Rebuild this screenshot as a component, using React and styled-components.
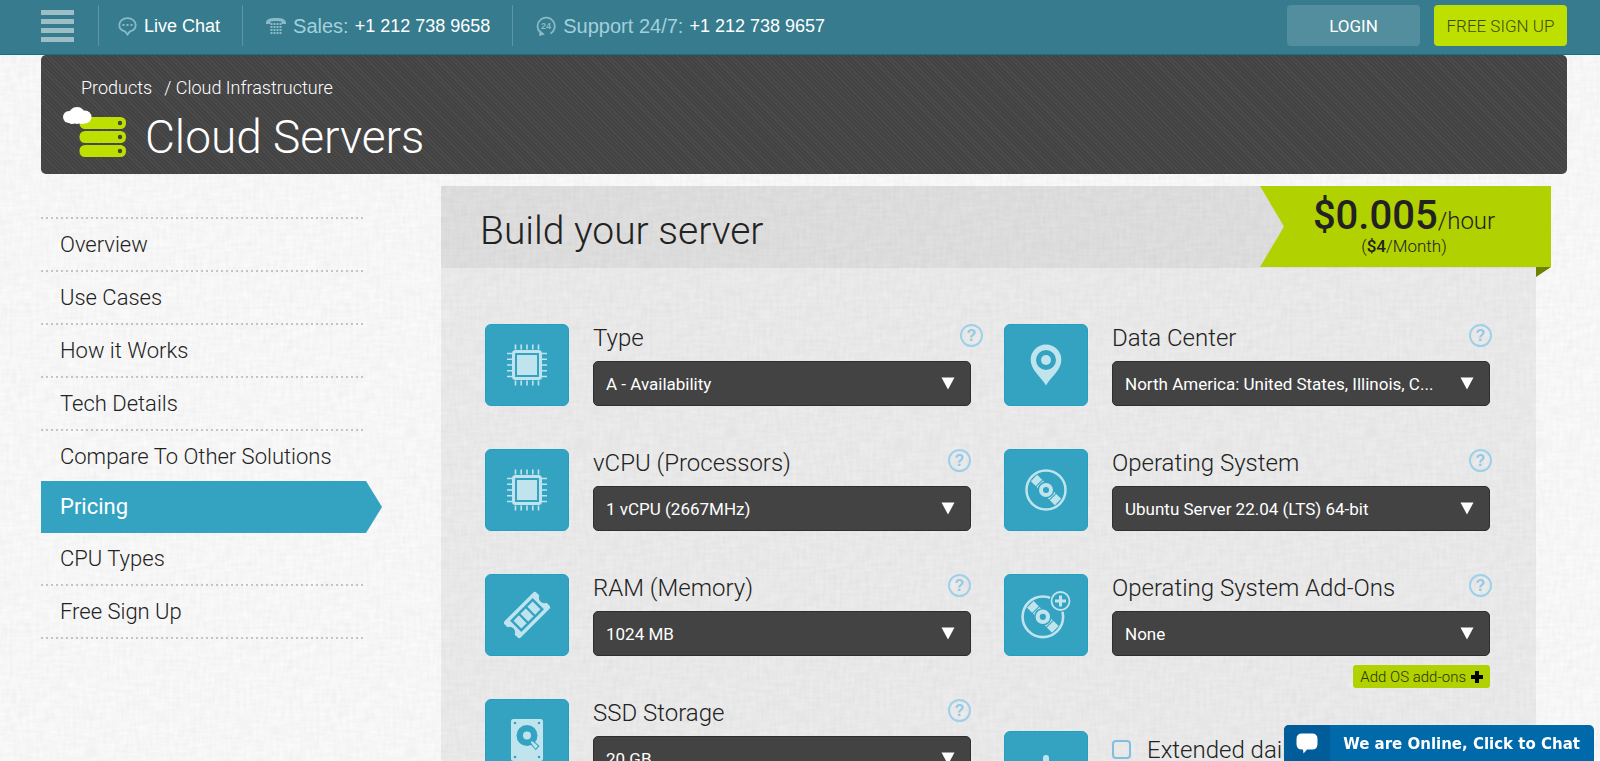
import React, { useState } from "react";
import styled, { createGlobalStyle, css } from "styled-components";

const LINEN = `url("data:image/svg+xml,%3Csvg xmlns='http://www.w3.org/2000/svg' width='320' height='320'%3E%3Cfilter id='a' x='0' y='0' width='100%25' height='100%25'%3E%3CfeTurbulence type='fractalNoise' baseFrequency='.06 .3' numOctaves='2' stitchTiles='stitch'/%3E%3CfeColorMatrix values='0 0 0 0 0 0 0 0 0 0 0 0 0 0 0 .04 0 0 0 -.01'/%3E%3C/filter%3E%3Cfilter id='b' x='0' y='0' width='100%25' height='100%25'%3E%3CfeTurbulence type='fractalNoise' baseFrequency='.3 .06' numOctaves='2' seed='4' stitchTiles='stitch'/%3E%3CfeColorMatrix values='0 0 0 0 0 0 0 0 0 0 0 0 0 0 0 .04 0 0 0 -.01'/%3E%3C/filter%3E%3Crect width='320' height='320' filter='url(%23a)'/%3E%3Crect width='320' height='320' filter='url(%23b)'/%3E%3C/svg%3E")`;

const ARROW = `url("data:image/svg+xml,%3Csvg xmlns='http://www.w3.org/2000/svg' width='14' height='13'%3E%3Cpath d='M.5.5h13L7 12.5z' fill='%23fff'/%3E%3C/svg%3E")`;

const GlobalStyle = createGlobalStyle`
  *, *::before, *::after {
    box-sizing: border-box;
  }
  body {
    margin: 0;
    background: #fbfbfb ${LINEN};
    color: #222;
    font-family: Roboto, "Open Sans", sans-serif;
    font-weight: 300;
  }
  h1, h2, p, ul {
    margin: 0;
    padding: 0;
    font-weight: 300;
  }
  a {
    color: inherit;
    text-decoration: none;
  }
  button, select, input {
    font: inherit;
    cursor: pointer;
  }
  svg {
    display: block;
    flex: none;
  }
`;

/* top bar */

const TopBar = styled.header`
  display: flex;
  align-items: center;
  height: 55px;
  padding: 0 33px 3px 41px;
  background: #367c8e;
  border-bottom: 1px solid #12708a;
`;

const MenuButton = styled.button`
  display: flex;
  flex-direction: column;
  gap: 4px;
  width: 33px;
  margin-right: 24px;
  padding: 0;
  border: 0;
  background: none;
`;

const MenuBar = styled.span`
  height: 5px;
  background: #9bbec7;
`;

const Contact = styled.a`
  display: flex;
  align-items: center;
  height: 41px;
  padding: 1px 22px 0 ${(p) => p.$indent || 23}px;
  border-left: 1px solid #5d95a4;
  font: 20px "Liberation Sans", Arial, sans-serif;
  color: #a3d0dc;
  white-space: nowrap;

  svg {
    margin-right: 7px;
  }
  strong {
    font-size: 18px;
    font-weight: 400;
    color: #fff;
  }
  span + strong {
    margin-left: 6px;
  }
`;

const Actions = styled.div`
  display: flex;
  gap: 14px;
  margin-left: auto;
`;

const ActionButton = styled.button`
  width: 133px;
  height: 41px;
  padding: 0;
  border: 0;
  border-radius: 4px;
  font-size: 17px;
  white-space: nowrap;
  background: ${(p) => (p.$primary ? "#bee000" : "#528e9d")};
  color: ${(p) => (p.$primary ? "#3f4a10" : "#fff")};
  font-weight: ${(p) => (p.$primary ? 300 : 400)};
`;

/* title banner */

const Banner = styled.section`
  margin: 0 33px 0 41px;
  padding: 20px 22px 11px;
  border-radius: 5px;
  background: repeating-linear-gradient(45deg, #434343 0 2px, #4c4c4c 2px 3px);
  color: #fff;
`;

const Breadcrumbs = styled.nav`
  display: flex;
  gap: 12px;
  padding-left: 18px;
  font-size: 18px;
  line-height: 26px;
`;

const Title = styled.h1`
  display: flex;
  align-items: center;
  gap: 19px;
  font-size: 46px;
  line-height: 52px;

  span {
    padding-top: 10px;
  }
`;

/* body */

const Body = styled.main`
  display: flex;
  align-items: flex-start;
  justify-content: space-between;
  gap: 59px;
  padding: 12px 64px 0 41px;
`;

const DOTS = "repeating-linear-gradient(90deg, #c4c4c4 0 2px, transparent 2px 5px)";

const SideMenu = styled.ul`
  flex: none;
  width: 341px;
  margin-top: 31px;
  list-style: none;

  &::before {
    content: "";
    display: block;
    width: 322px;
    height: 2px;
    background: ${DOTS};
  }
`;

const SideLink = styled.a`
  display: block;
  width: 322px;
  padding: 10px 19px 12px;
  background: ${DOTS} bottom / 100% 2px no-repeat;
  font-size: 22px;
  line-height: 31px;
  white-space: nowrap;

  ${(p) =>
    p.$active &&
    css`
      width: 341px;
      height: 52px;
      margin-top: -3px;
      background: #34a3c2;
      color: #fff;
      font-weight: 400;
      clip-path: polygon(0 0, 325px 0, 100% 50%, 325px 100%, 0 100%);
    `}
`;

const Panel = styled.section`
  flex: 1;
  min-width: 0;
  background: rgba(0, 0, 0, 0.055);
`;

const PanelHead = styled.div`
  display: flex;
  align-items: flex-start;
  justify-content: space-between;
  height: 82px;
  padding-left: 39px;
  background: rgba(0, 0, 0, 0.05);

  h2 {
    padding-top: 8px;
    font-size: 39px;
    line-height: 74px;
  }
`;

const Ribbon = styled.div`
  position: relative;
  width: 291px;
  height: 81px;
  margin-right: -15px;
  padding: 12px 3px 0 0;
  background: #b1d100;
  clip-path: polygon(0 0, 100% 0, 100% 81px, 276px 91px, 276px 81px, 0 81px, 24px 50%);
  text-align: center;

  &::after {
    content: "";
    position: absolute;
    top: 100%;
    right: 0;
    width: 15px;
    height: 10px;
    background: #6d8100;
  }
`;

const Price = styled.p`
  font-size: 24px;
  line-height: 40px;

  strong {
    font-size: 40px;
    line-height: 36px;
    font-weight: 500;
  }
`;

const Monthly = styled.p`
  font-size: 17px;
  line-height: 18px;
  margin-top: -4px;

  strong {
    font-weight: 500;
  }
`;

const Form = styled.form`
  display: grid;
  grid-template-columns: 1fr 1fr;
  column-gap: 33px;
  padding: 56px 46px 45px 44px;
`;

const Column = styled.div`
  display: flex;
  flex-direction: column;
  gap: 43px;
  min-width: 0;
`;

const FieldRow = styled.div`
  display: flex;
  align-items: flex-start;
  gap: 24px;
`;

const Tile = styled.div`
  display: flex;
  flex: none;
  align-items: center;
  justify-content: center;
  width: 84px;
  height: 82px;
  border: 1px solid #239fc1;
  border-radius: 6px;
  background: #34a3c2;
  color: #c0e4ed;
`;

const FieldBody = styled.div`
  display: flex;
  flex: 1;
  flex-direction: column;
  min-width: 0;
`;

const FieldHead = styled.div`
  display: flex;
  align-items: flex-start;
  justify-content: space-between;
  height: 37px;
  margin-right: -${(p) => p.$outset || 0}px;

  label {
    font-size: 24px;
    line-height: 28px;
    white-space: nowrap;
  }
`;

const HelpButton = styled.button`
  width: 23px;
  height: 23px;
  padding: 0;
  border: 2px solid #9fd0ea;
  border-radius: 50%;
  background: none;
  color: #94c9e6;
  font: bold 16px/18px "Liberation Sans", Arial, sans-serif;
`;

const Select = styled.select`
  width: 100%;
  height: 45px;
  padding: 0 40px 0 12px;
  appearance: none;
  border: 1px solid #2f2f2f;
  border-radius: 5px;
  background: #434343 ${ARROW} no-repeat right 15px top 15px;
  color: #fff;
  font-size: 17px;
  font-weight: 400;
`;

const AddButton = styled.button`
  display: flex;
  align-items: center;
  align-self: flex-end;
  gap: 5px;
  height: 23px;
  margin-top: 9px;
  padding: 0 7px;
  border: 0;
  border-radius: 3px;
  background: #b1d100;
  color: #2b3300;
  font-size: 15px;
  white-space: nowrap;
`;

const CheckLabel = styled.label`
  display: flex;
  align-items: center;
  gap: 16px;
  height: 37px;
  font-size: 24px;
  white-space: nowrap;
`;

const Checkbox = styled.input`
  width: 19px;
  height: 19px;
  margin: 0;
  appearance: none;
  border: 2px solid #7fc0e0;
  border-radius: 4px;

  &:checked {
    background: #34a3c2;
  }
`;

const ChatButton = styled.button`
  position: fixed;
  right: 6px;
  bottom: 0;
  display: flex;
  height: 36px;
  padding: 0;
  border: 0;
  border-radius: 5px 5px 0 0;
  overflow: hidden;
  background: #0069aa;
  color: #fff;
  font: bold 15px/36px "DejaVu Sans", Verdana, sans-serif;
  white-space: nowrap;
`;

const ChatIcon = styled.span`
  display: flex;
  align-items: center;
  justify-content: center;
  width: 46px;
  height: 36px;
  background: #005d99;
`;

const ChatText = styled.span`
  padding: 1px 14px 0 13px;
`;

/* icons */

const BubbleIcon = () => (
  <svg width="19" height="19" viewBox="0 0 19 19" fill="none" stroke="#8bb9c5">
    <path d="M9.5 1.2c4.6 0 8.2 3 8.2 6.8 0 3-2.3 5.5-5.7 6.4L9.5 17.5 7 14.4C3.6 13.5 1.3 11 1.3 8c0-3.8 3.6-6.8 8.2-6.8z" strokeWidth="1.8" />
    <path d="M4.5 8h10" strokeWidth="2" strokeDasharray="2 2" />
  </svg>
);

const PhoneIcon = () => (
  <svg width="20" height="17" viewBox="0 0 20 17" fill="#8bb9c5">
    <path d="M0 4.5C.4 1.3 3.5 0 10 0s9.6 1.3 10 4.5V6h-4.5V3.5c-3-.7-8-.7-11 0V6H0z" />
    {[5, 8, 11, 14].map((y) =>
      [4, 7, 10, 13].map((x) => <rect key={`${x}-${y}`} x={x + 0.5} y={y} width="2" height="2" />)
    )}
  </svg>
);

const SupportIcon = () => (
  <svg width="20" height="20" viewBox="0 0 20 20">
    <path d="M14.5 17.6A8.6 8.6 0 1 0 4 16.2" fill="none" stroke="#8bb9c5" strokeWidth="1.8" />
    <path d="M3 20l.8-6 5 4.5z" fill="#8bb9c5" />
    <text x="10" y="13" textAnchor="middle" fontFamily="Liberation Sans" fontWeight="700" fontSize="9" fill="#8bb9c5">
      24
    </text>
  </svg>
);

const ServersIcon = () => (
  <svg width="63" height="51" viewBox="0 0 63 51">
    {[10, 24, 38].map((y) => (
      <g key={y}>
        <rect x="16.5" y={y} width="46.5" height="12" rx="5.5" fill="#bee000" />
        <circle cx="57" cy={y + 6} r="2.2" fill="#444" />
      </g>
    ))}
    <g fill="#fff">
      <circle cx="6" cy="10" r="6" />
      <circle cx="14" cy="8.5" r="8.5" />
      <circle cx="22" cy="10" r="6.5" />
      <circle cx="9" cy="12.5" r="4.5" />
      <circle cx="19" cy="12.5" r="4.5" />
    </g>
  </svg>
);

const ChipIcon = () => (
  <svg width="40" height="42" viewBox="0 0 40 42" fill="none" stroke="currentColor">
    <rect x="6.5" y="7.5" width="27" height="27" rx="2" strokeWidth="3" />
    <rect x="10" y="11" width="20" height="20" fill="currentColor" stroke="none" />
    <path d="M8.5 .5v5M14.2 .5v5M20 .5v5M25.800 .5v5M31.500 .5v5M8.500 36.500v5M14.200 36.500v5M20 36.500v5M25.800 36.500v5M31.500 36.500v5" strokeWidth="1.6" />
    <path d="M0 9.500h5M0 15.200h5M0 21h5M0 26.800h5M0 32.500h5M35 9.500h5M35 15.200h5M35 21h5M35 26.800h5M35 32.500h5" strokeWidth="1.6" />
  </svg>
);

const RamIcon = () => (
  <svg width="48" height="48" viewBox="0 0 48 48">
    <g transform="rotate(-45 24 24)">
      <path d="M4 12.500h40q2.500 0 2.500 2.500v4q-3.500 1.500-3.500 5t3.500 5v4q0 2.500-2.500 2.500H4q-2.500 0-2.500-2.500v-4Q5 27.500 5 24t-3.500-5v-4q0-2.500 2.500-2.500z" fill="currentColor" />
      <rect x="8" y="16" width="32" height="16" fill="#34a3c2" />
      <path d="M10.500 18.500h7.500v11h-7.500zM20.250 18.500h7.500v11h-7.500zM30 18.500h7.500v11H30z" fill="currentColor" />
    </g>
  </svg>
);

const DriveIcon = () => (
  <svg width="32" height="42" viewBox="0 0 32 42">
    <rect width="32" height="42" rx="2.5" fill="currentColor" />
    <g fill="#34a3c2">
      <circle cx="4" cy="4" r="1.3" />
      <circle cx="28" cy="4" r="1.3" />
      <circle cx="4" cy="38" r="1.3" />
      <circle cx="28" cy="38" r="1.3" />
      <circle cx="16" cy="16.5" r="10.5" />
    </g>
    <circle cx="16" cy="16.5" r="4" fill="currentColor" />
    <path d="M20 19.500l8.500 7.500-3.800 4.200-7.200-8.700z" fill="#34a3c2" />
    <path d="M21 22l6 5-2.500 2.800-4.700-6.300z" fill="currentColor" />
  </svg>
);

const PinIcon = () => (
  <svg width="32" height="42" viewBox="0 0 32 42">
    <path fill="currentColor" fillRule="evenodd" d="M16 .5A15.300 15.300 0 0 1 31.300 16C31.300 26 21 33 16 41.500 11 33 .7 26 .7 16A15.300 15.300 0 0 1 16 .5zM16 6a10 10 0 1 0 0 20 10 10 0 0 0 0-20z" />
    <circle cx="16" cy="16" r="5" fill="currentColor" />
  </svg>
);

const discArt = (
  <>
    <circle cx="21" cy="21" r="19.5" fill="none" stroke="currentColor" strokeWidth="2.5" />
    <g transform="rotate(45 21 21)" fill="currentColor">
      <path d="M4 16.500h7v9H4zM12 16.500h3v9h-3zM27 16.500h3v9h-3zM31 16.500h7v9h-7z" />
    </g>
    <circle cx="21" cy="21" r="8.5" fill="#34a3c2" />
    <circle cx="21" cy="21" r="5" fill="none" stroke="currentColor" strokeWidth="4" />
  </>
);

const DiscIcon = () => (
  <svg width="42" height="42" viewBox="0 0 42 42">
    {discArt}
  </svg>
);

const DiscPlusIcon = () => (
  <svg width="50" height="48" viewBox="0 0 50 48">
    <g transform="translate(0 4) scale(1.04)">{discArt}</g>
    <circle cx="39.5" cy="10" r="11" fill="#34a3c2" />
    <circle cx="39.5" cy="10" r="9" fill="none" stroke="currentColor" strokeWidth="1.8" />
    <path d="M39.500 4.500v11M34 10h11" stroke="currentColor" strokeWidth="3" />
  </svg>
);

const BackupIcon = () => (
  <svg width="40" height="34" viewBox="0 0 40 34" fill="none" stroke="currentColor" strokeWidth="6" strokeLinecap="round" strokeLinejoin="round">
    <path d="M20 3v24M10 19l10 10 10-10" />
  </svg>
);

const PlusIcon = () => (
  <svg width="12" height="12" viewBox="0 0 12 12">
    <path d="M4 0h4v4h4v4H8v4H4V8H0V4h4z" fill="#000" />
  </svg>
);

const SpeechIcon = () => (
  <svg width="22" height="21" viewBox="0 0 22 21">
    <path d="M6 .5h10q5.500 0 5.500 5.500v5q0 5.500-5.500 5.500h-5L7.500 20.500 7 16.500H6Q.5 16.500.5 11V6Q.5.5 6 .5z" fill="#fff" />
  </svg>
);

const MENU = [
  "Overview",
  "Use Cases",
  "How it Works",
  "Tech Details",
  "Compare To Other Solutions",
  "Pricing",
  "CPU Types",
  "Free Sign Up",
];

const HARDWARE = [
  { id: "type", label: "Type", value: "A - Availability", icon: <ChipIcon />, outset: 12 },
  { id: "vcpu", label: "vCPU (Processors)", value: "1 vCPU (2667MHz)", icon: <ChipIcon /> },
  { id: "ram", label: "RAM (Memory)", value: "1024 MB", icon: <RamIcon /> },
  { id: "ssd", label: "SSD Storage", value: "20 GB", icon: <DriveIcon /> },
];

const SOFTWARE = [
  { id: "dc", label: "Data Center", value: "North America: United States, Illinois, C...", icon: <PinIcon />, outset: 2 },
  { id: "os", label: "Operating System", value: "Ubuntu Server 22.04 (LTS) 64-bit", icon: <DiscIcon />, outset: 2 },
  { id: "addons", label: "Operating System Add-Ons", value: "None", icon: <DiscPlusIcon />, outset: 2, action: "Add OS add-ons" },
];

const Field = ({ id, label, value, icon, outset, action }) => (
  <FieldRow>
    <Tile>{icon}</Tile>
    <FieldBody>
      <FieldHead $outset={outset}>
        <label htmlFor={id}>{label}</label>
        <HelpButton type="button">?</HelpButton>
      </FieldHead>
      <Select id={id}>
        <option>{value}</option>
      </Select>
      {action && (
        <AddButton type="button">
          {action}
          <PlusIcon />
        </AddButton>
      )}
    </FieldBody>
  </FieldRow>
);

const App = () => {
  const [backup, setBackup] = useState(false);

  return (
    <>
      <GlobalStyle />
      <TopBar>
        <MenuButton aria-label="Menu">
          <MenuBar />
          <MenuBar />
          <MenuBar />
          <MenuBar />
        </MenuButton>
        <Contact href="#chat" $indent={19}>
          <BubbleIcon />
          <strong>Live Chat</strong>
        </Contact>
        <Contact href="tel:+12127389658">
          <PhoneIcon />
          <span>Sales:</span>
          <strong>+1 212 738 9658</strong>
        </Contact>
        <Contact href="tel:+12127389657">
          <SupportIcon />
          <span>Support 24/7:</span>
          <strong>+1 212 738 9657</strong>
        </Contact>
        <Actions>
          <ActionButton>LOGIN</ActionButton>
          <ActionButton $primary>FREE SIGN UP</ActionButton>
        </Actions>
      </TopBar>

      <Banner>
        <Breadcrumbs>
          <a href="#products">Products</a>
          <a href="#cloud">/ Cloud Infrastructure</a>
        </Breadcrumbs>
        <Title>
          <ServersIcon />
          <span>Cloud Servers</span>
        </Title>
      </Banner>

      <Body>
        <SideMenu>
          {MENU.map((item) => (
            <li key={item}>
              <SideLink href="#menu" $active={item === "Pricing"}>
                {item}
              </SideLink>
            </li>
          ))}
        </SideMenu>

        <Panel>
          <PanelHead>
            <h2>Build your server</h2>
            <Ribbon>
              <Price>
                <strong>$0.005</strong>/hour
              </Price>
              <Monthly>
                (<strong>$4</strong>/Month)
              </Monthly>
            </Ribbon>
          </PanelHead>
          <Form>
            <Column>
              {HARDWARE.map((field) => (
                <Field key={field.id} {...field} />
              ))}
            </Column>
            <Column>
              {SOFTWARE.map((field) => (
                <Field key={field.id} {...field} />
              ))}
              <FieldRow>
                <Tile>
                  <BackupIcon />
                </Tile>
                <CheckLabel>
                  <Checkbox type="checkbox" checked={backup} onChange={(e) => setBackup(e.target.checked)} />
                  Extended daily backup
                </CheckLabel>
              </FieldRow>
            </Column>
          </Form>
        </Panel>
      </Body>

      <ChatButton>
        <ChatIcon>
          <SpeechIcon />
        </ChatIcon>
        <ChatText>We are Online, Click to Chat</ChatText>
      </ChatButton>
    </>
  );
};

export default App;
